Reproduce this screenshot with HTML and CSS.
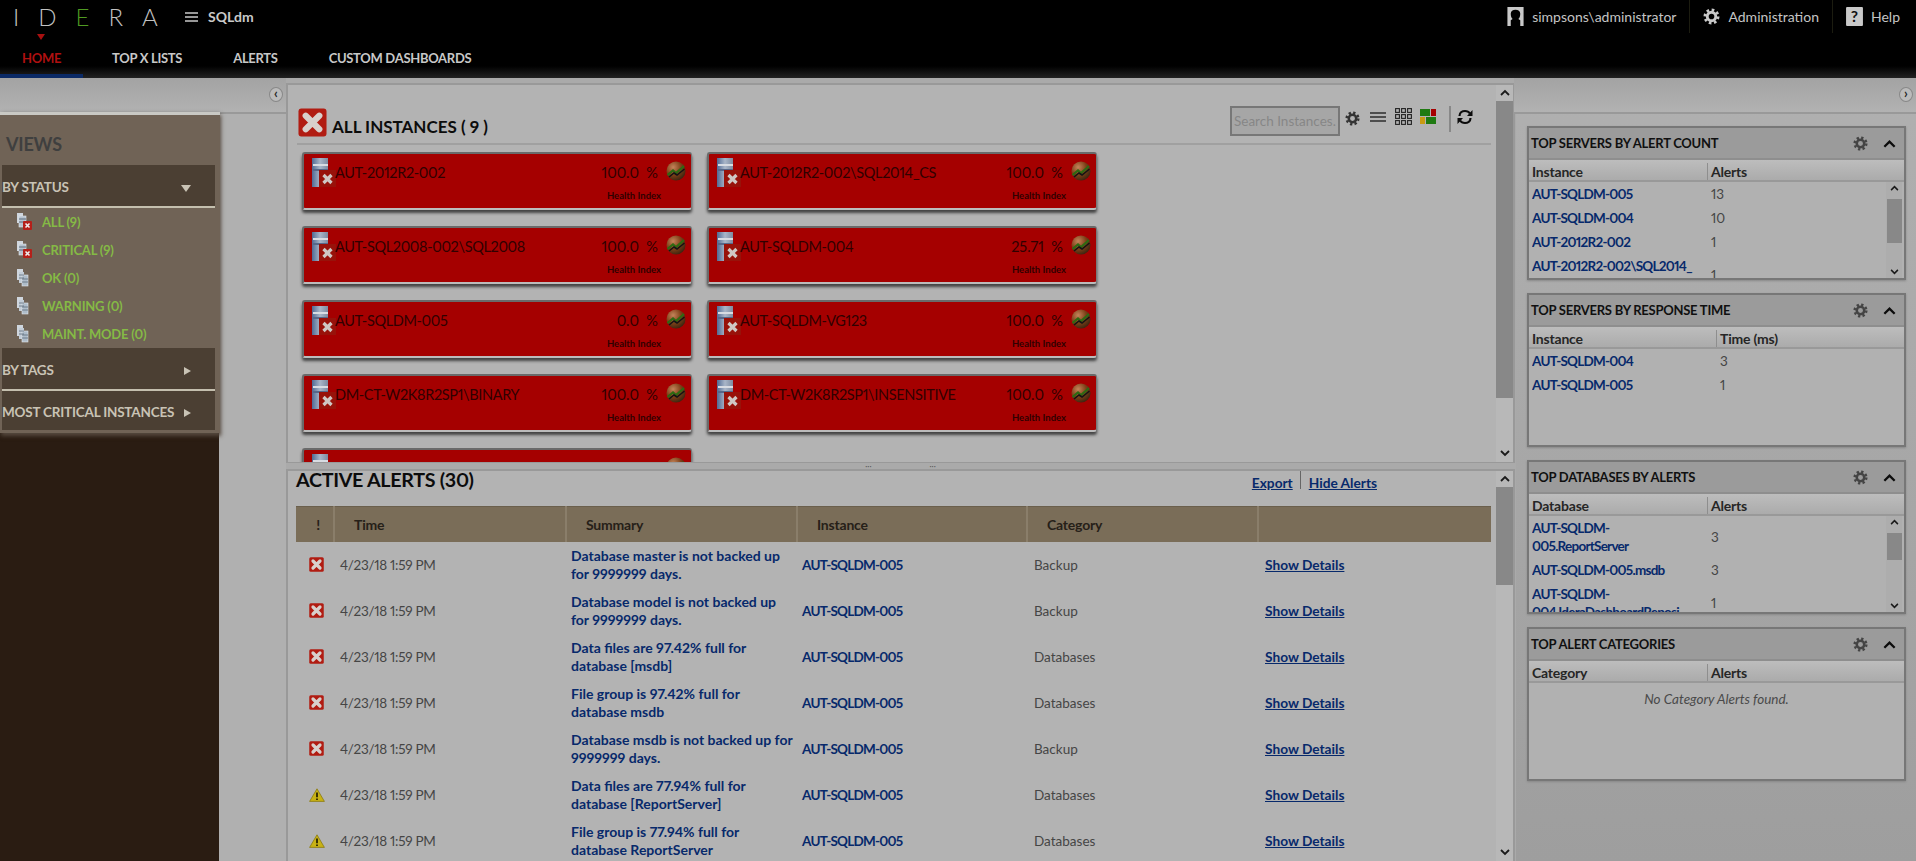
FILE: index.html
```html
<!DOCTYPE html>
<html lang="en">
<head>
<meta charset="utf-8">
<title>SQLdm</title>
<link rel="stylesheet" href="styles.css">
</head>
<body>
<svg class="defs" xmlns="http://www.w3.org/2000/svg">
  <defs>
    <radialGradient id="orbg" cx="35%" cy="30%" r="75%"><stop offset="0" stop-color="#c4845a"/><stop offset=".55" stop-color="#7e4018"/><stop offset="1" stop-color="#3a2410"/></radialGradient>
    <linearGradient id="srv" x1="0" x2="1" y1="0" y2="0"><stop offset="0" stop-color="#4f6a94"/><stop offset=".5" stop-color="#a9b6c8"/><stop offset="1" stop-color="#7d8ba0"/></linearGradient>
    <symbol id="i-x" viewBox="0 0 30 30"><rect x="0.5" y="0.5" width="29" height="29" rx="3" fill="#b11c12"/><path d="M8 8 L22 22 M22 8 L8 22" stroke="#d8d0cc" stroke-width="6.5" stroke-linecap="round"/></symbol>
    <symbol id="i-warn" viewBox="0 0 16 14"><path d="M8 .8 L15.4 13.4 H.6 Z" fill="#c8b214" stroke="#8a7a10" stroke-width=".8" stroke-linejoin="round"/><path d="M8 4.5 V9.2 M8 10.4 V12" stroke="#2a2400" stroke-width="1.8"/></symbol>
    <symbol id="i-srv" viewBox="0 0 24 29"><rect x="0" y="0" width="16" height="29" fill="url(#srv)"/><rect x="1" y="6" width="15" height="2" fill="#d8dce2"/><rect x="1" y="11" width="15" height="2" fill="#56688a"/><rect x="7" y="12" width="17" height="17" fill="#98120a"/><path d="M11.500 17 L19.500 25 M19.500 17 L11.500 25" stroke="#cfc8c4" stroke-width="3.200"/></symbol>
    <symbol id="i-srv-x" viewBox="0 0 16 18"><rect x="1" y="0" width="6" height="10" fill="#cfd6de"/><rect x="3" y="3" width="7" height="11" fill="#b6c2cf" stroke="#e4e8ec" stroke-width=".6"/><path d="M3 6h7M3 9h7" stroke="#5b6a7a"/><rect x="7" y="8" width="9" height="9" rx="1" fill="#b5201a"/><path d="M9.500 10.500 L13.500 14.500 M13.500 10.500 L9.500 14.500" stroke="#eee" stroke-width="1.600"/></symbol>
    <symbol id="i-srv-ok" viewBox="0 0 12 18"><rect x="0" y="0" width="6" height="11" fill="#cfd6de"/><rect x="2" y="3" width="5" height="11" fill="#c2ccd6"/><rect x="5" y="6" width="6" height="11" fill="#aebcc9" stroke="#e4e8ec" stroke-width=".6"/><path d="M2 6h5M2 9h5M5 10h6M5 13h6" stroke="#5b6a7a" stroke-width=".8"/></symbol>
    <symbol id="i-orb" viewBox="0 0 20 20"><circle cx="10" cy="10" r="9.500" fill="url(#orbg)"/><path d="M1.500 14 L7 9.500 L10 12 L18 5" fill="none" stroke="#2d6a12" stroke-width="2.200"/><path d="M3 16 L8 12 L11 14 L18.500 8" fill="none" stroke="#141414" stroke-width="1.600"/></symbol>
    <symbol id="i-gear" viewBox="0 0 20 20"><circle cx="10" cy="10" r="5" fill="none" stroke="currentColor" stroke-width="3.400"/><circle cx="10" cy="10" r="7.800" fill="none" stroke="currentColor" stroke-width="3.200" stroke-dasharray="3.060 3.060"/></symbol>
    <symbol id="i-up" viewBox="0 0 10 7"><path d="M1 6 L5 2 L9 6" fill="none" stroke="currentColor" stroke-width="1.800"/></symbol>
    <symbol id="i-down" viewBox="0 0 10 7"><path d="M1 1 L5 5 L9 1" fill="none" stroke="currentColor" stroke-width="1.800"/></symbol>
  </defs>
</svg>

<header class="topbar">
  <div class="top-row">
    <div class="brand">
      <span class="logo">ID<span class="logo-e">E</span>RA</span>
      <svg class="burger" viewBox="0 0 13 10"><path d="M0 1h13M0 5h13M0 9h13" stroke="#c9c9c9" stroke-width="1.600"/></svg>
      <span class="product">SQLdm</span>
    </div>
    <div class="user-menu">
      <div class="user-item">
        <svg class="uicon" viewBox="0 0 17 20"><path d="M0 0h17v20h-3.500v-6l-2-1.500c1.500-1.500 2-3 2-5.500 0-2.500-2-4-5-4s-5 1.500-5 4c0 2.500.5 4 2 5.500l-2 1.500v6H0z" fill="#c9c9c9"/></svg>
        <span>simpsons\administrator</span>
      </div>
      <div class="user-item sep">
        <svg class="uicon gear-light" viewBox="0 0 20 20"><use href="#i-gear"/></svg>
        <span>Administration</span>
      </div>
      <div class="user-item sep last">
        <svg class="uicon" viewBox="0 0 16 18"><rect width="16" height="18" rx="1" fill="#c9c9c9"/><text x="8" y="14.500" text-anchor="middle" class="help-q">?</text></svg>
        <span>Help</span>
      </div>
    </div>
  </div>
  <nav class="nav-row">
    <a class="nav-link active">HOME</a>
    <a class="nav-link">TOP X LISTS</a>
    <a class="nav-link">ALERTS</a>
    <a class="nav-link">CUSTOM DASHBOARDS</a>
  </nav>
</header>

<main class="main">
  <aside class="left">
    <div class="side-bar side-bar-left"><span class="round-btn">&#8249;</span></div>
    <div class="left-body">
      <div class="views-col">
        <div class="views">
          <h2 class="views-title">VIEWS</h2>
          <div class="accordion open"><span>BY STATUS</span><i class="tri tri-down"></i></div>
          <ul class="view-list">
            <li><svg class="vicon" viewBox="0 0 16 18"><use href="#i-srv-x"/></svg>ALL (9)</li>
            <li><svg class="vicon" viewBox="0 0 16 18"><use href="#i-srv-x"/></svg>CRITICAL (9)</li>
            <li><svg class="vicon" viewBox="0 0 16 18"><use href="#i-srv-ok" width="12" height="18" x="1"/></svg>OK (0)</li>
            <li><svg class="vicon" viewBox="0 0 16 18"><use href="#i-srv-ok" width="12" height="18" x="1"/></svg>WARNING (0)</li>
            <li><svg class="vicon" viewBox="0 0 16 18"><use href="#i-srv-ok" width="12" height="18" x="1"/></svg>MAINT. MODE (0)</li>
          </ul>
          <div class="accordion"><span>BY TAGS</span><i class="tri tri-right"></i></div>
          <div class="accordion shorter"><span>MOST CRITICAL INSTANCES</span><i class="tri tri-right"></i></div>
        </div>
      </div>
      <div class="left-gutter"></div>
    </div>
  </aside>

  <section class="center">
    <div class="panel panel-instances">
      <div class="panel-content">
        <div class="inst-head">
          <svg class="head-x" viewBox="0 0 30 30"><use href="#i-x"/></svg>
          <h1 class="inst-title">ALL INSTANCES ( 9 )</h1>
          <div class="tools">
            <input class="search" placeholder="Search Instances...">
            <svg class="tool t-gear" viewBox="0 0 20 20"><use href="#i-gear"/></svg>
            <svg class="tool t-lines" viewBox="0 0 16 10"><path d="M0 1h16M0 5h16M0 9h16" stroke="#2e2e2e" stroke-width="1.400"/></svg>
            <svg class="tool t-grid" viewBox="0 0 17 17"><g fill="none" stroke="#222" stroke-width="1.100"><rect x=".6" y=".6" width="3.800" height="3.800"/><rect x="6.600" y=".6" width="3.800" height="3.800"/><rect x="12.600" y=".6" width="3.800" height="3.800"/><rect x=".6" y="6.600" width="3.800" height="3.800"/><rect x="6.600" y="6.600" width="3.800" height="3.800"/><rect x="12.600" y="6.600" width="3.800" height="3.800"/><rect x=".6" y="12.600" width="3.800" height="3.800"/><rect x="6.600" y="12.600" width="3.800" height="3.800"/><rect x="12.600" y="12.600" width="3.800" height="3.800"/></g></svg>
            <svg class="tool t-status" viewBox="0 0 16 15"><rect width="10" height="7" fill="#1f7a12"/><rect x="11" width="5" height="7" fill="#a50000"/><rect y="8" width="5" height="7" fill="#c89a12"/><rect x="6" y="8" width="10" height="7" fill="#1f7a12"/></svg>
            <span class="tool-sep"></span>
            <svg class="tool t-refresh" viewBox="0 0 16 16"><path d="M2.500 7 C2.500 3.500 5.500 2 8 2 C10.500 2 12 3 13 4.500 M13.500 9 C13.500 12.500 10.500 14 8 14 C5.500 14 4 13 3 11.500" fill="none" stroke="#0c0c0c" stroke-width="2.200"/><path d="M15.500 1 V7 H10 Z M.5 15 V9 H6 Z" fill="#0c0c0c"/></svg>
          </div>
        </div>
        <div class="cards">
          <article class="card"><svg class="card-icon" viewBox="0 0 24 29"><use href="#i-srv"/></svg><span class="card-name">AUT-2012R2-002</span><div class="card-side"><div class="card-stat"><span class="pct">100.0&nbsp; %</span><svg class="orb" viewBox="0 0 20 20"><use href="#i-orb"/></svg></div><span class="hi">Health Index</span></div></article>
          <article class="card"><svg class="card-icon" viewBox="0 0 24 29"><use href="#i-srv"/></svg><span class="card-name">AUT-2012R2-002\SQL2014_CS</span><div class="card-side"><div class="card-stat"><span class="pct">100.0&nbsp; %</span><svg class="orb" viewBox="0 0 20 20"><use href="#i-orb"/></svg></div><span class="hi">Health Index</span></div></article>
          <article class="card"><svg class="card-icon" viewBox="0 0 24 29"><use href="#i-srv"/></svg><span class="card-name">AUT-SQL2008-002\SQL2008</span><div class="card-side"><div class="card-stat"><span class="pct">100.0&nbsp; %</span><svg class="orb" viewBox="0 0 20 20"><use href="#i-orb"/></svg></div><span class="hi">Health Index</span></div></article>
          <article class="card"><svg class="card-icon" viewBox="0 0 24 29"><use href="#i-srv"/></svg><span class="card-name">AUT-SQLDM-004</span><div class="card-side"><div class="card-stat"><span class="pct">25.71&nbsp; %</span><svg class="orb" viewBox="0 0 20 20"><use href="#i-orb"/></svg></div><span class="hi">Health Index</span></div></article>
          <article class="card"><svg class="card-icon" viewBox="0 0 24 29"><use href="#i-srv"/></svg><span class="card-name">AUT-SQLDM-005</span><div class="card-side"><div class="card-stat"><span class="pct">0.0&nbsp; %</span><svg class="orb" viewBox="0 0 20 20"><use href="#i-orb"/></svg></div><span class="hi">Health Index</span></div></article>
          <article class="card"><svg class="card-icon" viewBox="0 0 24 29"><use href="#i-srv"/></svg><span class="card-name">AUT-SQLDM-VG123</span><div class="card-side"><div class="card-stat"><span class="pct">100.0&nbsp; %</span><svg class="orb" viewBox="0 0 20 20"><use href="#i-orb"/></svg></div><span class="hi">Health Index</span></div></article>
          <article class="card"><svg class="card-icon" viewBox="0 0 24 29"><use href="#i-srv"/></svg><span class="card-name">DM-CT-W2K8R2SP1\BINARY</span><div class="card-side"><div class="card-stat"><span class="pct">100.0&nbsp; %</span><svg class="orb" viewBox="0 0 20 20"><use href="#i-orb"/></svg></div><span class="hi">Health Index</span></div></article>
          <article class="card"><svg class="card-icon" viewBox="0 0 24 29"><use href="#i-srv"/></svg><span class="card-name">DM-CT-W2K8R2SP1\INSENSITIVE</span><div class="card-side"><div class="card-stat"><span class="pct">100.0&nbsp; %</span><svg class="orb" viewBox="0 0 20 20"><use href="#i-orb"/></svg></div><span class="hi">Health Index</span></div></article>
          <article class="card"><svg class="card-icon" viewBox="0 0 24 29"><use href="#i-srv"/></svg><span class="card-name"></span><div class="card-side"><div class="card-stat"><span class="pct"></span><svg class="orb" viewBox="0 0 20 20"><use href="#i-orb"/></svg></div></div></article>
        </div>
      </div>
      <div class="scroll scroll-main">
        <svg class="sc-arrow" viewBox="0 0 10 7"><use href="#i-up"/></svg>
        <div class="sc-track"><div class="sc-thumb thumb-inst"></div></div>
        <svg class="sc-arrow" viewBox="0 0 10 7"><use href="#i-down"/></svg>
      </div>
    </div>

    <div class="splitter"><span>&#183;&#183;&#183;</span><span>&#183;&#183;&#183;</span></div>

    <div class="panel panel-alerts">
      <div class="panel-content">
        <div class="alerts-head">
          <h1 class="alerts-title">ACTIVE ALERTS (30)</h1>
          <div class="alerts-links"><a class="ul-link">Export</a><span class="link-sep"></span><a class="ul-link">Hide Alerts</a></div>
        </div>
        <table class="alerts">
          <colgroup><col class="c1"><col class="c2"><col class="c3"><col class="c4"><col class="c5"><col class="c6"></colgroup>
          <thead><tr><th class="bang">!</th><th>Time</th><th>Summary</th><th>Instance</th><th>Category</th><th></th></tr></thead>
          <tbody>
            <tr><td class="sev"><svg class="sev-x" viewBox="0 0 30 30"><use href="#i-x"/></svg></td><td class="t">4/23/18 1:59 PM</td><td class="s">Database master is not backed up for 9999999 days.</td><td class="i">AUT-SQLDM-005</td><td class="cat">Backup</td><td class="d"><a class="ul-link">Show Details</a></td></tr>
            <tr><td class="sev"><svg class="sev-x" viewBox="0 0 30 30"><use href="#i-x"/></svg></td><td class="t">4/23/18 1:59 PM</td><td class="s">Database model is not backed up for 9999999 days.</td><td class="i">AUT-SQLDM-005</td><td class="cat">Backup</td><td class="d"><a class="ul-link">Show Details</a></td></tr>
            <tr><td class="sev"><svg class="sev-x" viewBox="0 0 30 30"><use href="#i-x"/></svg></td><td class="t">4/23/18 1:59 PM</td><td class="s">Data files are 97.42% full for database [msdb]</td><td class="i">AUT-SQLDM-005</td><td class="cat">Databases</td><td class="d"><a class="ul-link">Show Details</a></td></tr>
            <tr><td class="sev"><svg class="sev-x" viewBox="0 0 30 30"><use href="#i-x"/></svg></td><td class="t">4/23/18 1:59 PM</td><td class="s">File group is 97.42% full for database msdb</td><td class="i">AUT-SQLDM-005</td><td class="cat">Databases</td><td class="d"><a class="ul-link">Show Details</a></td></tr>
            <tr><td class="sev"><svg class="sev-x" viewBox="0 0 30 30"><use href="#i-x"/></svg></td><td class="t">4/23/18 1:59 PM</td><td class="s">Database msdb is not backed up for 9999999 days.</td><td class="i">AUT-SQLDM-005</td><td class="cat">Backup</td><td class="d"><a class="ul-link">Show Details</a></td></tr>
            <tr><td class="sev"><svg class="sev-w" viewBox="0 0 16 14"><use href="#i-warn"/></svg></td><td class="t">4/23/18 1:59 PM</td><td class="s">Data files are 77.94% full for database [ReportServer]</td><td class="i">AUT-SQLDM-005</td><td class="cat">Databases</td><td class="d"><a class="ul-link">Show Details</a></td></tr>
            <tr><td class="sev"><svg class="sev-w" viewBox="0 0 16 14"><use href="#i-warn"/></svg></td><td class="t">4/23/18 1:59 PM</td><td class="s">File group is 77.94% full for database ReportServer</td><td class="i">AUT-SQLDM-005</td><td class="cat">Databases</td><td class="d"><a class="ul-link">Show Details</a></td></tr>
          </tbody>
        </table>
      </div>
      <div class="scroll scroll-main">
        <svg class="sc-arrow" viewBox="0 0 10 7"><use href="#i-up"/></svg>
        <div class="sc-track"><div class="sc-thumb thumb-alerts"></div></div>
        <svg class="sc-arrow" viewBox="0 0 10 7"><use href="#i-down"/></svg>
      </div>
    </div>
  </section>

  <aside class="right">
    <div class="side-bar side-bar-right"><span class="round-btn">&#8250;</span></div>
    <div class="widgets">
      <section class="widget">
        <header class="w-head"><h3>TOP SERVERS BY ALERT COUNT</h3><svg class="w-gear" viewBox="0 0 20 20"><use href="#i-gear"/></svg><svg class="w-chev" viewBox="0 0 10 7"><use href="#i-up"/></svg></header>
        <div class="w-cols cols-a"><span>Instance</span><span>Alerts</span></div>
        <div class="w-body">
          <div class="w-rows">
            <div class="w-row cols-a"><a>AUT-SQLDM-005</a><span>13</span></div>
            <div class="w-row cols-a"><a>AUT-SQLDM-004</a><span>10</span></div>
            <div class="w-row cols-a"><a>AUT-2012R2-002</a><span>1</span></div>
            <div class="w-row cols-a"><a>AUT-2012R2-002\SQL2014_<br>CS</a><span>1</span></div>
          </div>
          <div class="scroll scroll-w"><svg class="sc-arrow" viewBox="0 0 10 7"><use href="#i-up"/></svg><div class="sc-track"><div class="sc-thumb thumb-w1"></div></div><svg class="sc-arrow" viewBox="0 0 10 7"><use href="#i-down"/></svg></div>
        </div>
      </section>
      <section class="widget">
        <header class="w-head"><h3>TOP SERVERS BY RESPONSE TIME</h3><svg class="w-gear" viewBox="0 0 20 20"><use href="#i-gear"/></svg><svg class="w-chev" viewBox="0 0 10 7"><use href="#i-up"/></svg></header>
        <div class="w-cols cols-b"><span>Instance</span><span>Time (ms)</span></div>
        <div class="w-body">
          <div class="w-rows">
            <div class="w-row cols-b"><a>AUT-SQLDM-004</a><span>3</span></div>
            <div class="w-row cols-b"><a>AUT-SQLDM-005</a><span>1</span></div>
          </div>
        </div>
      </section>
      <section class="widget">
        <header class="w-head"><h3>TOP DATABASES BY ALERTS</h3><svg class="w-gear" viewBox="0 0 20 20"><use href="#i-gear"/></svg><svg class="w-chev" viewBox="0 0 10 7"><use href="#i-up"/></svg></header>
        <div class="w-cols cols-a"><span>Database</span><span>Alerts</span></div>
        <div class="w-body">
          <div class="w-rows">
            <div class="w-row cols-a"><a>AUT-SQLDM-<br>005.ReportServer</a><span>3</span></div>
            <div class="w-row cols-a"><a>AUT-SQLDM-005.msdb</a><span>3</span></div>
            <div class="w-row cols-a"><a>AUT-SQLDM-<br>004.IderaDashboardReposi</a><span>1</span></div>
          </div>
          <div class="scroll scroll-w"><svg class="sc-arrow" viewBox="0 0 10 7"><use href="#i-up"/></svg><div class="sc-track"><div class="sc-thumb thumb-w3"></div></div><svg class="sc-arrow" viewBox="0 0 10 7"><use href="#i-down"/></svg></div>
        </div>
      </section>
      <section class="widget">
        <header class="w-head"><h3>TOP ALERT CATEGORIES</h3><svg class="w-gear" viewBox="0 0 20 20"><use href="#i-gear"/></svg><svg class="w-chev" viewBox="0 0 10 7"><use href="#i-up"/></svg></header>
        <div class="w-cols cols-a"><span>Category</span><span>Alerts</span></div>
        <div class="w-body"><p class="w-empty">No Category Alerts found.</p></div>
      </section>
    </div>
  </aside>
</main>
</body>
</html>
```
FILE: styles.css
```css
* { box-sizing: border-box; }
html, body { margin: 0; padding: 0; height: 861px; overflow: hidden; }
body { font-family: "Lato", "Noto Sans", sans-serif; background: #aaa; color: #222; font-size: 15px; font-variant-numeric: proportional-nums; }
h1, h2, h3, p, ul { margin: 0; padding: 0; }
svg { display: block; flex: none; }
.defs { width: 0; height: 0; overflow: hidden; }

/* header */
.topbar { height: 78px; background: linear-gradient(#000 0, #000 66px, #222 78px); display: flex; flex-direction: column; }
.top-row { height: 39px; display: flex; justify-content: space-between; align-items: flex-start; }
.brand { display: flex; align-items: center; height: 33px; padding-left: 13px; }
.logo { width: 172px; font-weight: 300; font-size: 24px; letter-spacing: 19px; color: #c2c2c2; line-height: 24px; white-space: nowrap; }
.logo-e { color: #4f9a22; }
.burger { width: 13px; height: 10px; }
.product { margin-left: 10px; font-weight: 700; font-size: 14px; color: #c9c9c9; }
.user-menu { display: flex; height: 33px; padding-right: 16px; }
.user-item { display: flex; align-items: center; gap: 8px; padding-right: 13px; color: #c4c4c4; font-size: 14px; }
.user-item.sep { border-left: 1px solid #1c1c10; padding-left: 13px; }
.user-item.last { padding-right: 0; }
.uicon { width: 17px; height: 19px; }
.gear-light { color: #c9c9c9; }
.help-q { font: 700 15px "Lato", sans-serif; fill: #111; }
.nav-row { flex: 1; display: flex; align-items: flex-start; gap: 51px; padding-left: 22px; }
.nav-link { font-weight: 700; font-size: 13px; letter-spacing: -.3px; color: #c8c8c8; line-height: 38px; height: 39px; }
.nav-link.active { color: #b01010; position: relative; }
.nav-link.active::before { content: ""; position: absolute; left: 15px; top: -5px; border: 4px solid transparent; border-top: 6px solid #a81010; border-bottom: 0; }
.nav-link.active::after { content: ""; position: absolute; left: -22px; top: 35px; width: 83px; height: 4px; background: #0b2a66; }

/* main */
.main { height: 783px; display: flex; }
.side-bar { height: 36px; border-bottom: 2px solid #999; background: linear-gradient(#a3a3a3, #b2b2b2); display: flex; align-items: center; justify-content: flex-end; padding-bottom: 2px; }
.round-btn { width: 14px; height: 15px; border: 1px solid #888; border-radius: 50%; background: #bbb; color: #222; font-size: 13px; line-height: 11px; text-align: center; font-weight: 700; }
.side-bar-left { padding-right: 3px; }
.side-bar-right { padding-right: 3px; }

/* left */
.left { width: 286px; display: flex; flex-direction: column; }
.left-body { flex: 1; display: flex; }
.views-col { width: 219px; background: #2a1c12; box-shadow: 2px 0 4px #666; }
.views { height: 321px; margin-top: -2px; background: #706356; border-top: 3px solid #c9c9c4; box-shadow: 1px 3px 4px #55493e; padding: 0 5px 3px 2px; margin-right: -1px; position: relative; }
.views-title { font-size: 18px; font-weight: 700; color: #3f3f3f; line-height: 22px; padding: 18px 0 0 4px; height: 50px; letter-spacing: -.2px; }
.accordion { height: 43px; background: #4b3f33; border-bottom: 2px solid #c4bfae; color: #c9c3b5; font-weight: 700; font-size: 13.5px; letter-spacing: -.2px; display: flex; align-items: center; justify-content: space-between; padding: 2px 24px 0 0; }
.accordion.shorter { height: 39px; border-bottom: 0; }
.tri { display: block; }
.tri-down { border: 5px solid transparent; border-top: 7px solid #c9c3b5; border-bottom: 0; margin-top: 3px; }
.tri-right { border: 4px solid transparent; border-left: 7px solid #c9c3b5; border-right: 0; margin-top: 3px; }
.view-list { list-style: none; height: 140px; padding: 0 0 0 14px; }
.view-list li { display: flex; align-items: center; height: 28px; gap: 10px; color: #85ba45; font-weight: 700; font-size: 13px; letter-spacing: -.2px; }
.vicon { width: 16px; height: 18px; }
.left-gutter { flex: 1; background: #b0b0b0; }

/* center */
.center { width: 1229px; display: flex; flex-direction: column; padding-top: 5px; }
.panel { display: flex; border: 2px solid #999; background: #b3b3b3; overflow: hidden; }
.panel-instances { height: 380px; border-bottom-width: 1px; }
.panel-alerts { flex: 1; border-bottom: 0; }
.panel-content { flex: 1; min-width: 0; padding: 0 5px 0 9px; }
.splitter { height: 6px; display: flex; justify-content: center; gap: 58px; background: #aaa; color: #555; font-size: 8px; line-height: 6px; }

.scroll { display: flex; flex-direction: column; align-items: center; color: #1a1a1a; background: #b8b8b8; }
.scroll-main { width: 17px; }
.sc-arrow { width: 10px; height: 7px; margin: 4px 0 5px; }
.sc-track { flex: 1; width: 100%; }
.sc-thumb { background: #888; width: 100%; }
.thumb-inst { height: 297px; }
.thumb-alerts { height: 98px; }

.inst-head { height: 60px; border-bottom: 2px solid #a0a0a0; display: flex; align-items: flex-end; padding-bottom: 6px; }
.head-x { width: 29px; height: 29px; margin: 0 5px 0 1px; }
.inst-title { font-size: 17px; font-weight: 700; color: #0c0c0c; line-height: 24px; margin-bottom: -2px; }
.tools { margin-left: auto; display: flex; align-items: flex-start; height: 31px; }
.search { width: 110px; height: 30px; border: 2px solid #777; background: #a6a6a6; padding: 0 2px; margin-right: 5px; font: 400 13.5px "Lato", sans-serif; }
.search::placeholder { color: #868686; opacity: 1; }
.tool { margin-top: 3px; }
.t-gear { width: 15px; height: 15px; color: #333; margin-top: 5px; }
.t-lines { width: 16px; height: 10px; margin: 6px 0 0 10px; }
.t-grid { width: 17px; height: 17px; margin: 2px 0 0 9px; }
.t-status { width: 16px; height: 15px; margin: 3px 0 0 8px; }
.tool-sep { width: 2px; height: 26px; background: #888; margin: 0 6px 0 13px; }
.t-refresh { width: 16px; height: 16px; margin: 3px 18px 0 0; }

.cards { display: grid; grid-template-columns: 390px 390px; column-gap: 15px; row-gap: 16px; padding: 7px 0 0 5px; }
.card { height: 58px; background: #a50000; border-top: 2px solid #6a6a6a; border-left: 2px solid #6a6a6a; border-right: 1px solid #7a7a7a; border-bottom: 2px solid #bcbcbc; border-radius: 3px; box-shadow: 0 3px 3px #444; display: flex; padding: 4px 5px 0 8px; }
.card-icon { width: 24px; height: 29px; }
.card-name { flex: 1; margin-left: -1px; font-size: 14.5px; letter-spacing: -.35px; color: #300000; line-height: 22px; margin-top: 4px; white-space: nowrap; }
.card-side { width: 90px; display: flex; flex-direction: column; align-items: flex-end; }
.card-stat { display: flex; align-items: flex-start; gap: 8px; }
.pct { font-size: 14.5px; color: #300000; line-height: 22px; margin-top: 4px; }
.orb { width: 20px; height: 20px; margin-top: 3px; }
.hi { font-size: 9.5px; font-weight: 700; color: #300000; margin: 6px 25px 0 0; line-height: 12px; }

/* alerts */
.alerts-head { height: 35px; display: flex; justify-content: space-between; }
.alerts-title { font-size: 19.7px; font-weight: 700; color: #0c0c0c; line-height: 18px; letter-spacing: -.3px; margin-left: -1px; }
.alerts-links { display: flex; align-items: flex-start; margin-right: 114px; }
.ul-link { color: #07296b; font-weight: 700; font-size: 13.7px; text-decoration: underline; }
.alerts-links .ul-link { line-height: 24px; }
.link-sep { width: 1px; height: 18px; background: #666; margin: 0 8px 0 7px; }
.alerts { width: 1195px; table-layout: fixed; border-collapse: collapse; margin-left: -1px; }
.c1 { width: 38px; } .c2 { width: 232px; } .c3 { width: 231px; } .c4 { width: 230px; } .c5 { width: 231px; }
.alerts th { height: 35px; background: #7a6d58; border-left: 2px solid #8a7e6a; border-top: 1px solid #6a5f4c; text-align: left; padding: 0 0 0 19px; font-size: 14px; letter-spacing: -.2px; color: #262018; font-weight: 700; }
.alerts th:first-child { border-left: 0; }
.alerts th.bang { padding: 0 0 0 7px; text-align: center; }
.alerts td { height: 46px; padding: 0 5px 0 5px; font-size: 13.5px; color: #454545; vertical-align: middle; }
.alerts td.sev { padding: 0 0 0 13px; }
.sev-x { width: 15px; height: 15px; }
.sev-w { width: 16px; height: 14px; }
.alerts td.t { letter-spacing: -.3px; white-space: nowrap; padding-left: 6px; }
.alerts td.s { color: #07296b; font-weight: 700; font-size: 14px; line-height: 18px; padding: 0 0 0 5px; }
.alerts td.i { color: #07296b; font-weight: 700; letter-spacing: -.75px; }
.alerts td.cat { padding-left: 7px; }
.alerts td.d { padding-left: 7px; }

/* right */
.right { flex: 1; display: flex; flex-direction: column; background: linear-gradient(#b0b0b0, #9e9e9e); margin-left: 1px; }
.side-bar-right { margin-left: -2px; }
.widgets { flex: 1; padding: 12px 10px 0 11px; display: flex; flex-direction: column; gap: 13px; }
.widget { height: 154px; border: 2px solid #777; background: #b1b1b1; display: flex; flex-direction: column; box-shadow: 0 1px 2px #888; }
.w-head { height: 32px; background: #9b9b9b; border-bottom: 2px solid #8e8e8e; display: flex; align-items: center; padding: 0 8px 0 2px; flex: none; }
.w-head h3 { font-size: 13px; font-weight: 700; letter-spacing: -.25px; color: #101010; flex: 1; }
.w-gear { width: 15px; height: 15px; color: #444; margin-right: 15px; }
.w-chev { width: 13px; height: 9px; color: #0c0c0c; }
.w-cols { height: 22px; flex: none; display: grid; align-items: center; background: linear-gradient(#bdbdbd, #ababab); border-bottom: 2px solid #999; font-weight: 700; color: #262626; font-size: 14px; letter-spacing: -.2px; padding: 3px 0 0 3px; }
.w-cols span + span { border-left: 1px solid #8e8e8e; padding-left: 3px; line-height: 17px; }
.cols-a { grid-template-columns: 175px 1fr; }
.cols-b { grid-template-columns: 184px 1fr; }
.w-body { flex: 1; min-height: 0; display: flex; overflow: hidden; }
.w-rows { flex: 1; min-width: 0; padding-left: 3px; }
.w-row { display: grid; align-items: center; min-height: 24px; padding: 3px 0; }
.w-row a { color: #07296b; font-weight: 700; font-size: 13.5px; letter-spacing: -.75px; line-height: 18px; white-space: nowrap; overflow: hidden; }
.w-row span { color: #454545; font-size: 13.5px; padding-left: 4px; }
.scroll-w { width: 16px; margin-right: 2px; background: #adadad; }
.scroll-w .sc-arrow { margin: 3px 0; width: 9px; height: 6px; }
.thumb-w1 { height: 44px; width: 15px; margin: 5px auto 0; }
.thumb-w3 { height: 27px; width: 15px; margin: 5px auto 0; }
.w-empty { flex: 1; text-align: center; font-style: italic; color: #4a4a4a; font-size: 13.5px; padding-top: 8px; }
```
